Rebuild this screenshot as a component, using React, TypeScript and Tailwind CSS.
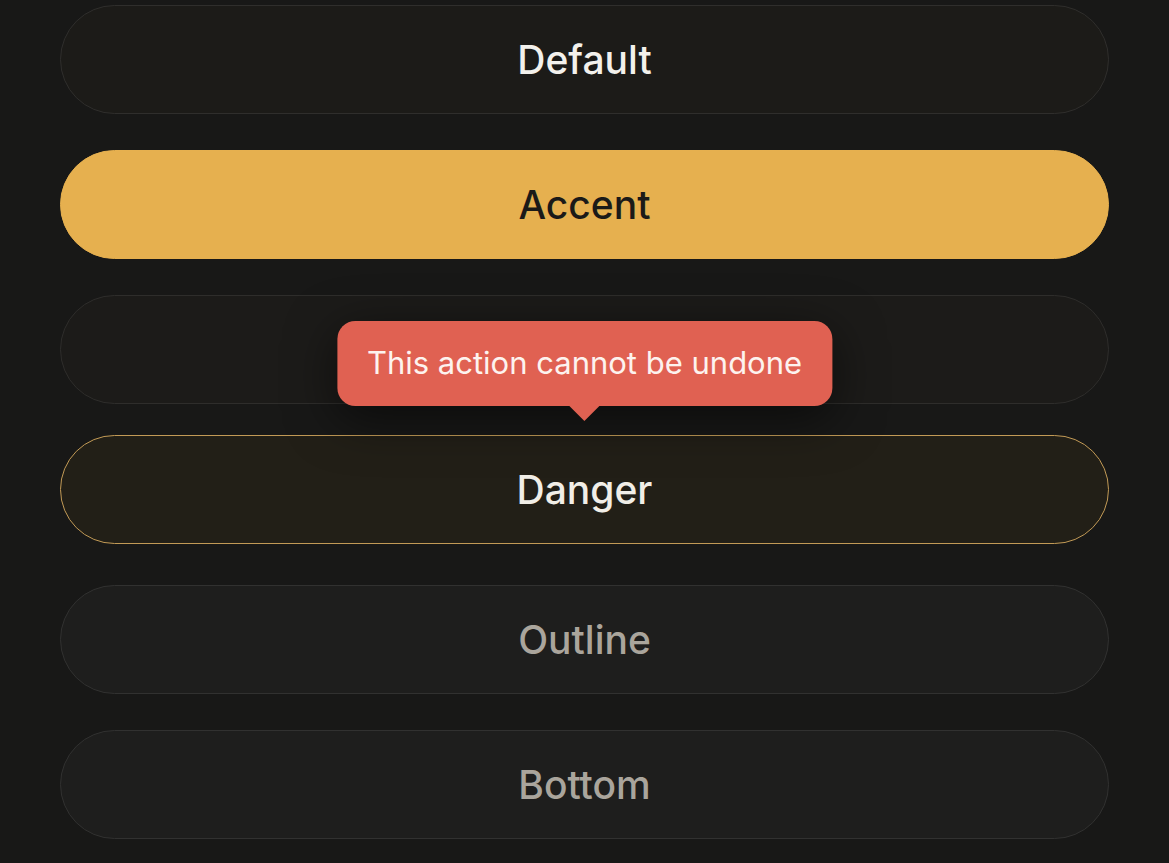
import React from 'react'

type Variant = 'default' | 'accent' | 'plain' | 'danger' | 'outline'

const variantClass: Record<Variant, string> = {
  default: 'bg-[#1c1b18] border-[#2f2e2c] text-[#f3f1ec]',
  accent: 'bg-[#e6b04f] border-[#e6b04f] text-[#1b1a18]',
  plain: 'bg-[#1c1b19] border-[#2e2d2b] text-[#f3f1ec]',
  danger: 'bg-[#221f17] border-[#c29a56] text-[#f1eee7]',
  outline: 'bg-[#1e1e1d] border-[#313130] text-[#aaa59c]',
}

// Tooltip sits above its button, arrow pointing down at the label.
function Tooltip({ text }: { text: string }) {
  return (
    <div className="pointer-events-none absolute bottom-[calc(100%+14px)] left-1/2 z-10 flex -translate-x-1/2 flex-col items-center">
      <div className="flex h-[85px] items-center whitespace-nowrap rounded-[18px] bg-[#e06152] px-[30px] text-[31px] text-[#fdf3ef] shadow-[0_12px_50px_rgba(0,0,0,0.55)]">
        {text}
      </div>
      <div className="h-0 w-0 border-x-[15px] border-t-[15px] border-x-transparent border-t-[#e06152]" />
    </div>
  )
}

function Button({ label, variant, tooltip, lifted }: { label?: string; variant: Variant; tooltip?: string; lifted?: boolean }) {
  return (
    <div className={lifted ? 'relative -translate-y-[5px]' : 'relative'}>
      {tooltip && <Tooltip text={tooltip} />}
      <button
        aria-label={label ?? 'Button'}
        className={`flex h-[109px] w-full items-center justify-center rounded-full border text-[39px] font-medium leading-none ${variantClass[variant]}`}
      >
        {label}
      </button>
    </div>
  )
}

export default function App() {
  return (
    <div
      className="min-h-[863px] w-full overflow-hidden bg-[#181817] px-[60px] pt-[5px]"
      style={{ fontFamily: 'Inter, "Noto Sans", sans-serif' }}
    >
      <div className="flex flex-col gap-[36px]">
        <Button label="Default" variant="default" />
        <Button label="Accent" variant="accent" />
        {/* label of this one is hidden under the tooltip */}
        <Button variant="plain" />
        <Button label="Danger" variant="danger" tooltip="This action cannot be undone" lifted />
        <Button label="Outline" variant="outline" />
        <Button label="Bottom" variant="outline" />
      </div>
    </div>
  )
}
